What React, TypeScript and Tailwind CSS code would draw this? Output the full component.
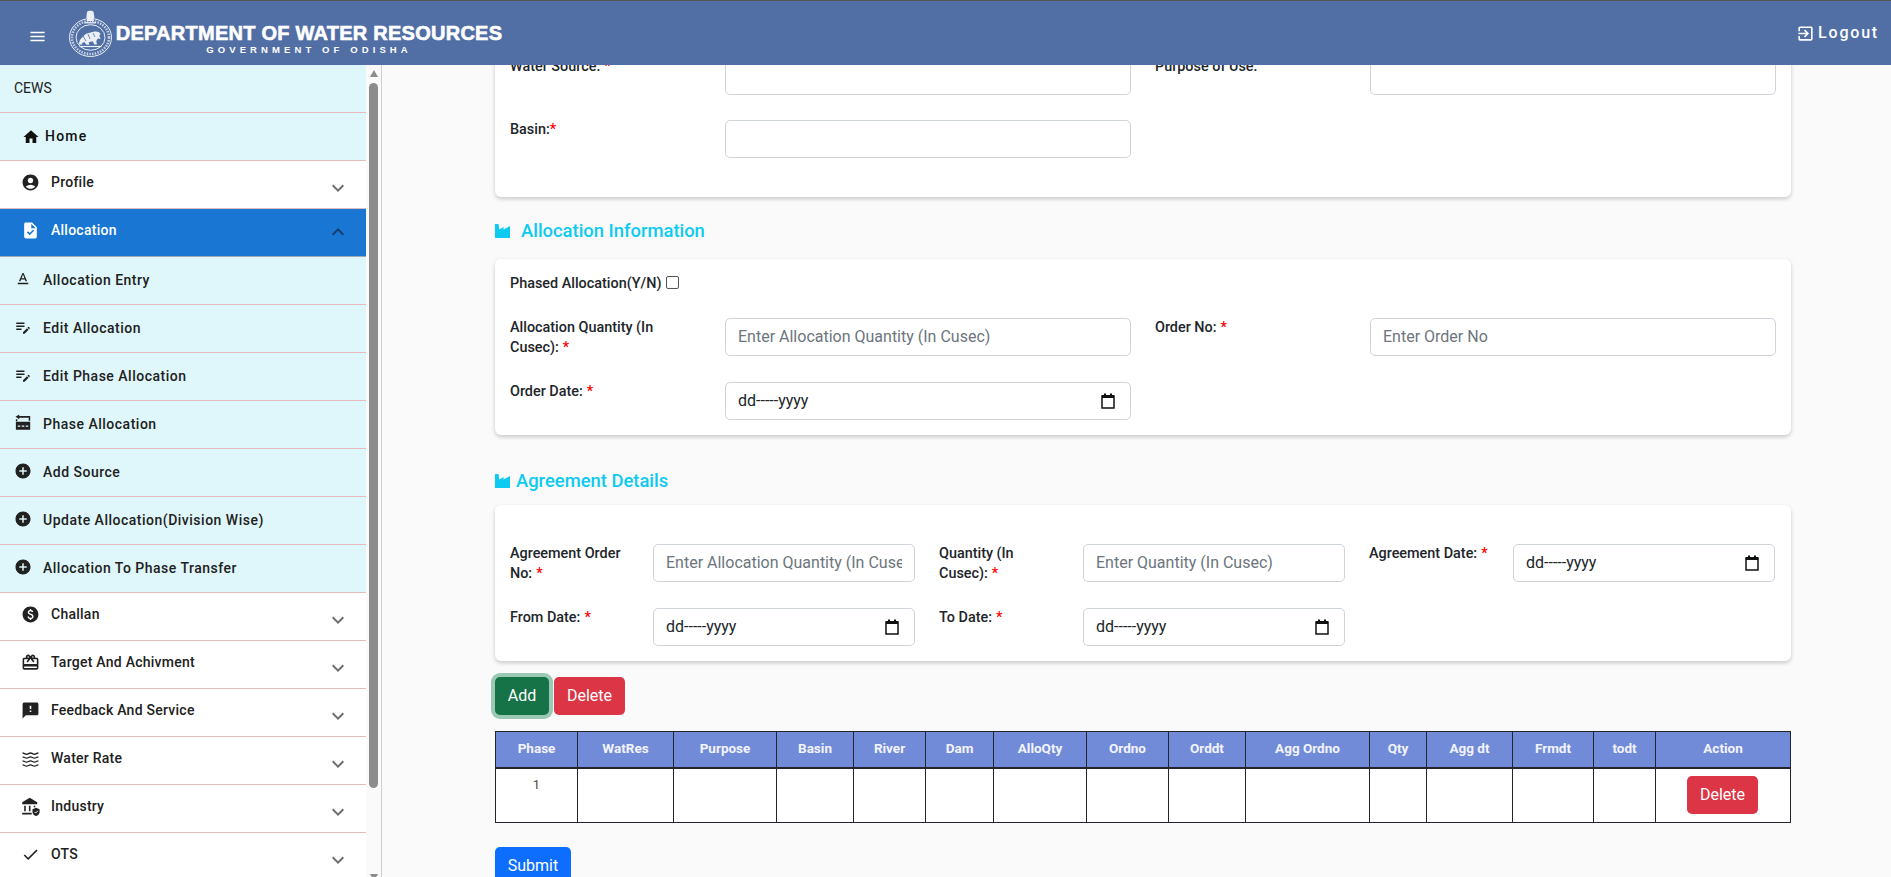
import React from "react"
import {
    MdAccountCircle,
    MdAddCircle,
    MdCheck,
    MdEditNote,
    MdExpandLess,
    MdExpandMore,
    MdFeedback,
    MdHome,
    MdMenu,
    MdOutlineExitToApp,
    MdOutlineRedeem,
    MdPaid,
    MdTask,
    MdTextFormat,
} from "react-icons/md"

const PhaseIcon = ({ className }: { className?: string }) => (
    <svg viewBox="0 0 24 24" className={className} fill="currentColor">
        <path d="M7 .5 2 3.800 7 7.100V4.900h12.600v4h2V2.700H7V.5Z" />
        <path d="M2.500 7h2v2.500h-2zM2.500 10.300h19.100V21H2.500Z" />
        <path d="M5 15.300h3.400v1.700H5zM10.300 15.300h3.400v1.700h-3.400zM15.600 15.300H19v1.700h-3.400z" fill="#dff7fa" />
    </svg>
)

const WaterIcon = ({ className }: { className?: string }) => (
    <svg viewBox="0 0 24 24" className={className} fill="none" stroke="currentColor" strokeWidth="1.700">
        <path d="M2 5c2.500 0 2.500 1.600 5 1.600S9.500 5 12 5s2.500 1.600 5 1.600S19.500 5 22 5" />
        <path d="M2 10c2.500 0 2.500 1.600 5 1.600S9.500 10 12 10s2.500 1.600 5 1.600S19.500 10 22 10" />
        <path d="M2 15c2.500 0 2.500 1.600 5 1.600s2.500-1.600 5-1.600 2.500 1.600 5 1.600 2.500-1.600 5-1.600" />
        <path d="M2 20c2.500 0 2.500 1.600 5 1.600s2.500-1.600 5-1.600 2.500 1.600 5 1.600 2.500-1.600 5-1.600" />
    </svg>
)

const IndustryIcon = ({ className }: { className?: string }) => (
    <svg viewBox="0 0 24 24" className={className} fill="currentColor">
        <path d="M11 1 1.500 6.500V9h19V6.500L11 1Z" />
        <path d="M4 11h2v7H4zM10 11h2v7h-2zM16 11h2v2h-2zM1.500 20h12v2.200h-12z" />
        <path d="M19 13.500 14.500 15.500v3.200c0 2.700 1.900 5 4.500 5.300 2.600-.3 4.500-2.600 4.500-5.300v-3.200L19 13.500Z" />
        <path d="m17 18.800 1.500 1.500 2.800-2.800" fill="none" stroke="#fff" strokeWidth="1.200" />
    </svg>
)

const FactoryIcon = () => (
    <svg viewBox="0 0 15 15" className="h-[15px] w-[15px] shrink-0" fill="#0dcaf0">
        <path d="M0 1h3.500l.8 5.500L8.500 4v2.500L15 3v12H0V1Z" />
    </svg>
)

const CalendarIcon = () => (
    <svg viewBox="0 0 14 16" className="h-4 w-[14px] shrink-0" fill="none">
        <path d="M1 3h12v12H1Z" stroke="#111" strokeWidth="1.500" />
        <path d="M1 2h12v3H1ZM3 .5h2v2H3ZM9 .5h2v2H9Z" fill="#111" />
    </svg>
)

const Emblem = () => (
    <svg viewBox="0 0 45 49" className="h-[49px] w-[45px] shrink-0" fill="none" stroke="#eaf0f6">
        <ellipse cx="22.500" cy="28.500" rx="21" ry="19" strokeWidth="1" />
        <ellipse cx="22.500" cy="28.500" rx="18.500" ry="16.500" strokeWidth="2.600" strokeDasharray="1.500 1.200" opacity=".75" />
        <ellipse cx="22.500" cy="28.500" rx="14.500" ry="12.800" strokeWidth="1" />
        <path
            d="M19 3c.6-1.700 6-1.700 6.600 0l.8 5.500-1 1.300.8 2.200H18.500l.8-2.200-1-1.300L19 3Z"
            fill="#eaf0f6"
            stroke="none"
        />
        <path d="M16.500 13.800h11.500" strokeWidth="1.300" />
        <path
            d="M11 35.500c0-3.500 1.600-6 3.400-7.300 1.400-1 2.500-3.400 4.600-3.800 2.500-.6 4.700-1.200 7.300-1.800 2.500-.5 5 .2 6.300 2.300l-1.300 1.700 1.300 3.400-2.800-.4-1.500 2.400.6 3.500h-2.600l-1.500-3.300-4.200 1 .9 2.300-3 .3-2.300-2.800-2.300 1.200.5 1.300H11Z"
            fill="#eaf0f6"
            stroke="none"
        />
        <path d="M15 27l3 5M20 25l2 5M25 24l2 4" stroke="#516fa5" strokeWidth=".8" />
        <path d="M11.500 37.500h22" strokeWidth="1.200" />
    </svg>
)

type SideItem = { label: string; Icon: React.ComponentType<{ className?: string }> }

const subItems: SideItem[] = [
    { label: "Allocation Entry", Icon: MdTextFormat },
    { label: "Edit Allocation", Icon: MdEditNote },
    { label: "Edit Phase Allocation", Icon: MdEditNote },
    { label: "Phase Allocation", Icon: PhaseIcon },
    { label: "Add Source", Icon: MdAddCircle },
    { label: "Update Allocation(Division Wise)", Icon: MdAddCircle },
    { label: "Allocation To Phase Transfer", Icon: MdAddCircle },
]

const lowerItems: SideItem[] = [
    { label: "Challan", Icon: MdPaid },
    { label: "Target And Achivment", Icon: MdOutlineRedeem },
    { label: "Feedback And Service", Icon: MdFeedback },
    { label: "Water Rate", Icon: WaterIcon },
    { label: "Industry", Icon: IndustryIcon },
    { label: "OTS", Icon: MdCheck },
]

const ParentRow = ({ label, Icon }: SideItem) => (
    <div className="flex h-12 shrink-0 items-center border-b border-[#e0bcbf] bg-white pl-[21px] pr-[16px] text-[#212121]">
        <Icon className="mb-1 h-[19px] w-[19px] shrink-0" />
        <span className="mb-1 ml-[11px] text-[14px] font-medium tracking-[0.25px]">{label}</span>
        <MdExpandMore className="ml-auto mt-[6px] h-6 w-6 text-[#6f6f6f]" />
    </div>
)

const SubRow = ({ label, Icon }: SideItem) => (
    <div className="flex h-12 shrink-0 items-center border-b border-[#e8bcbf] bg-[#dff7fa] pl-[14px] text-[#212121]">
        <Icon className="mb-1 h-[18px] w-[18px] shrink-0" />
        <span className="ml-[11px] text-[14px] font-medium tracking-[0.5px]">{label}</span>
    </div>
)

const Sidebar = () => (
    <aside className="flex h-[812px] w-[382px] shrink-0 overflow-hidden border-r border-[#cfcfcf] bg-[#fafafa]">
        <nav className="flex w-[366px] shrink-0 flex-col">
            <div className="flex h-12 shrink-0 items-center border-b border-[#e8bcbf] bg-[#dff7fa] pl-[14px] text-[14px] text-[#212121]">
                CEWS
            </div>
            <div className="flex h-12 shrink-0 items-center border-b border-[#e8bcbf] bg-[#dff7fa] pl-[22px] text-[#111]">
                <MdHome className="h-[18px] w-[18px] shrink-0" />
                <span className="ml-[5px] text-[14px] font-medium tracking-[1.2px]">Home</span>
            </div>
            <ParentRow label="Profile" Icon={MdAccountCircle} />
            <div className="flex h-12 shrink-0 items-center border-b border-[#9fa9b5] bg-[#1976d2] pl-[21px] pr-[16px] text-white">
                <MdTask className="mb-1 h-[19px] w-[19px] shrink-0" />
                <span className="mb-1 ml-[11px] text-[14px] font-medium tracking-[0.25px]">Allocation</span>
                <MdExpandLess className="mb-[2px] ml-auto h-6 w-6 text-[#123f6d]" />
            </div>
            {subItems.map((item) => (
                <SubRow key={item.label} {...item} />
            ))}
            {lowerItems.map((item) => (
                <ParentRow key={item.label} {...item} />
            ))}
        </nav>
        {/* scrollbar track */}
        <div className="flex w-[15px] shrink-0 flex-col items-center pt-[5px]">
            <div className="h-0 w-0 shrink-0 border-x-[4.500px] border-b-[7px] border-x-transparent border-b-[#8c8c8c]" />
            <div className="mt-[6px] h-[705px] w-[9px] shrink-0 rounded-[5px] bg-[#8c8c8c]" />
            <div className="mt-[86px] h-0 w-0 shrink-0 border-x-[4.500px] border-t-[7px] border-x-transparent border-t-[#8c8c8c]" />
        </div>
    </aside>
)

const Label = ({ text, star = true, tight = false }: { text: string; star?: boolean; tight?: boolean }) => (
    <label className="block text-[14.400px] font-medium leading-[20px] text-[#212529]">
        {text}
        {star && <span className={tight ? "text-[#ff0000]" : "ml-1 text-[#ff0000]"}>*</span>}
    </label>
)

const TextInput = ({ placeholder }: { placeholder?: string }) => (
    <input
        placeholder={placeholder}
        className="h-[38px] w-full rounded-[5px] border border-[#ced4da] bg-white px-3 pb-[2px] text-[16px] text-[#212529] outline-none placeholder:text-[#6c757d]"
    />
)

const DateInput = () => (
    <div className="flex h-[38px] w-full items-center justify-between rounded-[5px] border border-[#ced4da] bg-white pl-3 pr-[15px] text-[16px] text-[#212529]">
        <span>dd-----yyyy</span>
        <CalendarIcon />
    </div>
)

const Heading = ({ text, className, gap }: { text: string; className: string; gap: string }) => (
    <div className={`flex items-center ${className}`}>
        <FactoryIcon />
        <span className={`${gap} text-[18.400px] font-medium leading-[27px] text-[#0dcaf0]`}>{text}</span>
    </div>
)

const columns = [
    { name: "Phase", width: "w-[82px]" },
    { name: "WatRes", width: "w-[96px]" },
    { name: "Purpose", width: "w-[103px]" },
    { name: "Basin", width: "w-[77px]" },
    { name: "River", width: "w-[72px]" },
    { name: "Dam", width: "w-[68px]" },
    { name: "AlloQty", width: "w-[93px]" },
    { name: "Ordno", width: "w-[82px]" },
    { name: "Orddt", width: "w-[77px]" },
    { name: "Agg Ordno", width: "w-[124px]" },
    { name: "Qty", width: "w-[57px]" },
    { name: "Agg dt", width: "w-[86px]" },
    { name: "Frmdt", width: "w-[81px]" },
    { name: "todt", width: "w-[62px]" },
    { name: "Action", width: "w-[135px]" },
]

const PhaseTable = () => (
    <table className="mt-4 w-[1296px] table-fixed border-collapse">
        <colgroup>
            {columns.map((c) => (
                <col key={c.name} className={c.width} />
            ))}
        </colgroup>
        <thead>
            <tr className="h-[36px] bg-[#728bd9]">
                {columns.map((c) => (
                    <th
                        key={c.name}
                        className="border border-b-2 border-[#22252b] p-0 pb-[2px] text-center text-[13.500px] font-bold text-[#f2f4fb]"
                    >
                        {c.name}
                    </th>
                ))}
            </tr>
        </thead>
        <tbody>
            <tr className="h-[55px] bg-white">
                {columns.map((c, i) => (
                    <td key={c.name} className="border border-[#22252b] p-0 text-center">
                        {i === 0 && <span className="mb-[22px] block text-[13px] text-[#5a4a3a]">1</span>}
                        {i === columns.length - 1 && (
                            <button className="mr-[1px] h-[38px] w-[71px] rounded-[5px] bg-[#dc3545] text-[16px] text-white">
                                Delete
                            </button>
                        )}
                    </td>
                ))}
            </tr>
        </tbody>
    </table>
)

export default function App() {
    return (
        <div className="h-[877px] w-[1891px] overflow-hidden bg-[#fafafa] [font-family:Roboto,sans-serif]">
            <header className="relative z-10 flex h-[65px] items-center border-t border-[#555] bg-[#516fa5] text-white">
                <MdMenu className="ml-[28px] mt-[6px] h-[19px] w-[19px] shrink-0" />
                <div className="ml-[21px] mb-[-1px]">
                    <Emblem />
                </div>
                <div className="ml-[2px] mt-[11px] flex w-[388px] shrink-0 flex-col items-center whitespace-nowrap [font-family:'Liberation_Sans',sans-serif] font-bold">
                    <span className="text-[20px] leading-[22px] tracking-[0.25px] [-webkit-text-stroke:0.6px_white]">
                        DEPARTMENT OF WATER RESOURCES
                    </span>
                    <span className="text-[9.500px] leading-[12px] tracking-[4.100px]">GOVERNMENT OF ODISHA</span>
                </div>
                <div className="ml-auto mr-[12px] flex items-center gap-[3px]">
                    <MdOutlineExitToApp className="h-[19px] w-[19px]" />
                    <span className="text-[16px] font-medium tracking-[1.800px]">Logout</span>
                </div>
            </header>
            <div className="flex">
                <Sidebar />
                <main className="h-[812px] flex-1 overflow-hidden pl-[113px]">
                    <div className="-mt-[24px] w-[1296px]">
                        <section className="rounded-[6px] bg-white pb-[39px] pl-[15px] pt-4 shadow-[0_2px_4px_rgba(0,0,0,0.2)]">
                            <div className="grid grid-cols-[191px_406px_191px_406px] gap-x-6 gap-y-[25px]">
                                <Label text="Water Source:" />
                                <TextInput />
                                <Label text="Purpose of Use:" star={false} />
                                <TextInput />
                                <Label text="Basin:" tight />
                                <TextInput />
                            </div>
                        </section>

                        <Heading text="Allocation Information" className="h-[62px] pt-[5px]" gap="ml-[11px]" />

                        <section className="rounded-[6px] bg-white pb-[15px] pl-[15px] pt-[14px] shadow-[0_2px_4px_rgba(0,0,0,0.2)]">
                            <div className="flex h-[45px] items-start pt-[1px] text-[14.400px] font-medium leading-[20px] text-[#212529]">
                                Phased Allocation(Y/N)
                                <input
                                    type="checkbox"
                                    className="ml-[5px] mt-[2px] h-[13px] w-[13px] appearance-none rounded-[2px] border border-[#555] bg-white"
                                />
                            </div>
                            <div className="grid grid-cols-[191px_406px_191px_406px] gap-x-6 gap-y-6">
                                <Label text="Allocation Quantity (In Cusec):" />
                                <TextInput placeholder="Enter Allocation Quantity (In Cusec)" />
                                <Label text="Order No:" />
                                <TextInput placeholder="Enter Order No" />
                                <Label text="Order Date:" />
                                <DateInput />
                            </div>
                        </section>

                        <Heading text="Agreement Details" className="h-[70px] pt-[20px]" gap="ml-[6px]" />

                        <section className="rounded-[6px] bg-white pb-[15px] pl-[15px] pt-[39px] shadow-[0_2px_4px_rgba(0,0,0,0.2)]">
                            <div className="grid grid-cols-[119px_262px_120px_262px_120px_262px] gap-x-6 gap-y-6">
                                <Label text="Agreement Order No:" />
                                <TextInput placeholder="Enter Allocation Quantity (In Cusec)" />
                                <Label text="Quantity (In Cusec):" />
                                <TextInput placeholder="Enter Quantity (In Cusec)" />
                                <Label text="Agreement Date:" />
                                <DateInput />
                                <Label text="From Date:" />
                                <DateInput />
                                <Label text="To Date:" />
                                <DateInput />
                            </div>
                        </section>

                        <div className="mt-4 flex gap-[5px]">
                            <button className="h-[38px] w-[54px] rounded-[5px] bg-[#157347] text-[16px] text-white shadow-[0_0_0_4px_rgba(60,153,110,0.5)]">
                                Add
                            </button>
                            <button className="h-[38px] w-[71px] rounded-[5px] bg-[#dc3545] text-[16px] text-white">
                                Delete
                            </button>
                        </div>

                        <PhaseTable />

                        <button className="mt-6 h-[38px] w-[76px] rounded-[5px] bg-[#0d6efd] text-[16px] text-white">
                            Submit
                        </button>
                    </div>
                </main>
            </div>
        </div>
    )
}
